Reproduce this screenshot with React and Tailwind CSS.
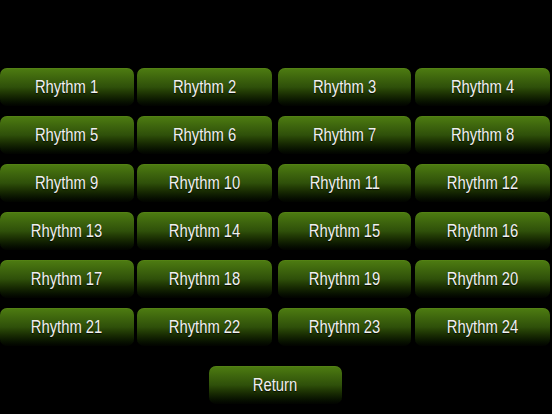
const rows = [
  [1, 2, 3, 4],
  [5, 6, 7, 8],
  [9, 10, 11, 12],
  [13, 14, 15, 16],
  [17, 18, 19, 20],
  [21, 22, 23, 24],
];

// column widths and left gaps, measured from the screenshot
const cols = [
  'w-[134px]',
  'w-[135px] ml-[3px]',
  'w-[133px] ml-[6px]',
  'w-[135px] ml-[4px]',
];

function GreenButton({ label, className = '' }) {
  return (
    <button
      type="button"
      className={`h-[38px] rounded-[7px] bg-gradient-to-b from-[#4e7d11] via-[#2f500a] to-[#020400] text-[18px] leading-none text-[#f0f0f0] [text-shadow:0_1px_1px_rgba(0,0,0,0.8)] shadow-[inset_0_1px_0_rgba(120,170,50,0.15)] ${className}`}
    >
      <span className="inline-block scale-x-[0.82]">{label}</span>
    </button>
  );
}

export default function App() {
  return (
    <div
      className="w-[552px] h-[414px] bg-black overflow-hidden pt-[68px]"
      style={{ fontFamily: '"Liberation Sans", Arial, sans-serif' }}
    >
      <div className="flex flex-col gap-[10px]">
        {rows.map((row, i) => (
          <div key={i} className="flex">
            {row.map((n, j) => (
              <GreenButton key={n} label={`Rhythm ${n}`} className={cols[j]} />
            ))}
          </div>
        ))}
      </div>
      <div className="flex pl-[209px] mt-[20px]">
        <GreenButton label="Return" className="w-[133px]" />
      </div>
    </div>
  );
}
